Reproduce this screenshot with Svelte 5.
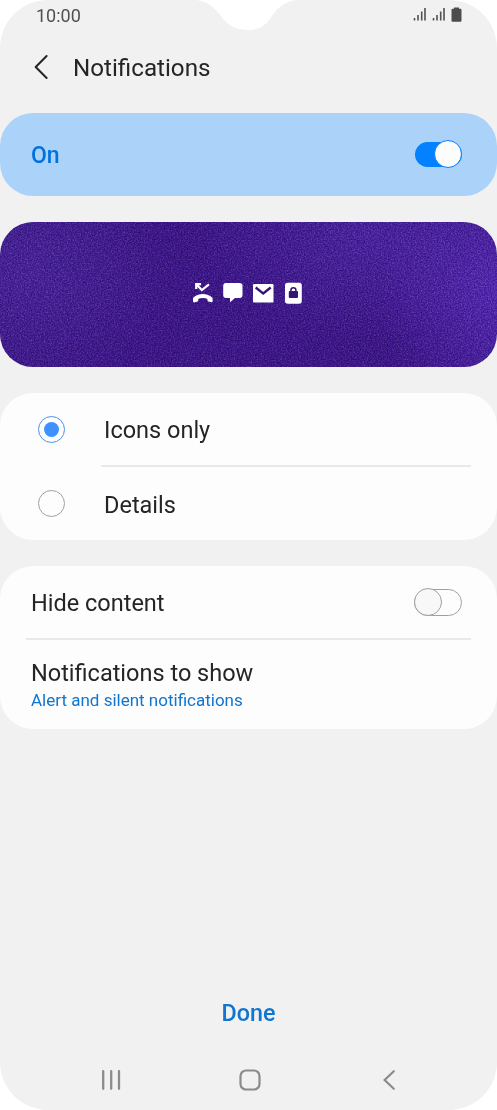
<script lang="ts">
  type Display = 'icons' | 'details';

  let enabled = $state(true);
  let hideContent = $state(false);
  let display = $state<Display>('icons');

  const options: { id: Display; label: string }[] = [
    { id: 'icons', label: 'Icons only' },
    { id: 'details', label: 'Details' },
  ];
</script>

{#snippet signal()}
  <svg class="signal" width="13" height="14" viewBox="0 0 13 14">
    <path d="M1.5 11v2.5M5 8v5.5M8.7 4.5v9M12 1v12.5" stroke="#505050" stroke-width="1.6" />
  </svg>
{/snippet}

<div class="phone">
  <svg class="notch" width="110" height="31" viewBox="0 0 110 31">
    <path d="M2 0C13 2 20 8 26 16C33 26 42 30 53.5 30C65 30 71 25 77 16C83 7 91 1 102 0Z" fill="#fff" />
  </svg>

  <div class="status">
    <span class="clock">10:00</span>
    <div class="indicators">
      {@render signal()}
      {@render signal()}
      <svg width="11" height="15" viewBox="0 0 11 15">
        <path d="M3 0.5h5v1.3h1.5q1 0 1 1v11q0 1-1 1h-8q-1 0-1-1v-11q0-1 1-1H3z" fill="#4c4c4c" />
      </svg>
    </div>
  </div>

  <header>
    <button class="back" aria-label="Back">
      <svg width="14" height="26" viewBox="0 0 14 26">
        <path d="M12.6 2L1.7 13L12.6 24" fill="none" stroke="#252525" stroke-width="2" stroke-linecap="round" stroke-linejoin="round" />
      </svg>
    </button>
    <h1>Notifications</h1>
  </header>

  <section class="card master">
    <span class="state">On</span>
    <button class="switch" class:on={enabled} role="switch" aria-checked={enabled} aria-label="Notifications" onclick={() => (enabled = !enabled)}>
      <span class="thumb"></span>
    </button>
  </section>

  <section class="card preview">
    <svg class="grain" width="497" height="145" aria-hidden="true">
      <filter id="grain" x="0" y="0" width="100%" height="100%" color-interpolation-filters="sRGB">
        <feTurbulence type="fractalNoise" baseFrequency="0.7" numOctaves="3" seed="4" />
        <feColorMatrix values="1.6 0 0 0 -0.3  1.6 0 0 0 -0.3  1.6 0 0 0 -0.3  0 0 0 0 1" />
      </filter>
      <rect width="497" height="145" filter="url(#grain)" />
    </svg>
    <div class="icons">
      <!-- missed call -->
      <svg width="22" height="22" viewBox="0 0 22 22">
        <path d="M4.2 7V2.2H9M4.6 2.6L9.8 8L17 2.3" fill="none" stroke="#fff" stroke-width="2.2" />
        <path d="M1 18.5V16C6 10.5 15.500 10.5 20.6 16V19.3Q20.6 20.4 19.5 20.3L16.2 19.5Q15.4 19.2 15.3 16.7Q11 15.2 6.5 16.7Q6.3 19.2 5.5 19.5L2 20.4Q1 20.4 1 18.5Z" fill="#fff" />
      </svg>
      <!-- message -->
      <svg width="22" height="22" viewBox="0 0 22 22">
        <path d="M4 1H17.5Q20.5 1 20.5 4V13Q20.5 16 17.5 16H13L8 20.3V16H4Q1.2 16 1.2 13V4Q1.2 1 4 1Z" fill="#fff" />
      </svg>
      <!-- mail -->
      <svg width="22" height="22" viewBox="0 0 22 22">
        <rect x="1" y="2" width="20.5" height="18.5" rx="1.2" fill="#fff" />
        <path d="M3.7 5.5L11.2 11.5L18.7 5.5" fill="none" stroke="#341477" stroke-width="2.3" />
      </svg>
      <!-- secure device -->
      <svg width="22" height="22" viewBox="0 0 22 22">
        <rect x="3" y="0.8" width="16.8" height="21" rx="2.8" fill="#fff" />
        <rect x="6.8" y="9" width="9.2" height="7" rx="1" fill="#341477" />
        <path d="M8.9 9.5V8.3a2.5 2.5 0 0 1 5 0v1.2" fill="none" stroke="#341477" stroke-width="1.5" />
      </svg>
    </div>
  </section>

  <section class="card options" role="radiogroup">
    {#each options as option (option.id)}
      <button class="option" role="radio" aria-checked={display === option.id} onclick={() => (display = option.id)}>
        <span class="radio" class:checked={display === option.id}></span>
        <span class="label">{option.label}</span>
      </button>
    {/each}
  </section>

  <section class="card settings">
    <div class="row">
      <span>Hide content</span>
      <button class="switch" class:on={hideContent} role="switch" aria-checked={hideContent} aria-label="Hide content" onclick={() => (hideContent = !hideContent)}>
        <span class="thumb"></span>
      </button>
    </div>
    <div class="show">
      <div class="title">Notifications to show</div>
      <div class="sub">Alert and silent notifications</div>
    </div>
  </section>

  <button class="done">Done</button>

  <nav>
    <button aria-label="Recents">
      <svg width="22" height="22" viewBox="0 0 22 22">
        <path d="M3.2 2.2V19.8M11.2 2.2V19.8M19 2.2V19.8" stroke="#8b8b8b" stroke-width="2.3" stroke-linecap="round" />
      </svg>
    </button>
    <button aria-label="Home">
      <svg width="22" height="22" viewBox="0 0 22 22">
        <rect x="1.5" y="1.5" width="19" height="19" rx="5.5" fill="none" stroke="#8b8b8b" stroke-width="2.2" />
      </svg>
    </button>
    <button aria-label="Back">
      <svg width="22" height="22" viewBox="0 0 22 22">
        <path d="M15.8 2.2L6.6 11L15.8 19.8" fill="none" stroke="#8b8b8b" stroke-width="2.2" stroke-linecap="round" />
      </svg>
    </button>
  </nav>
</div>

<style>
  :global(body) {
    background: #fff;
  }
  .phone {
    position: relative;
    display: flex;
    flex-direction: column;
    box-sizing: border-box;
    width: 497px;
    height: 1110px;
    overflow: hidden;
    border-radius: 48px;
    background: #f1f1f1;
    color: #252525;
    font-family: Roboto, sans-serif;
    font-size: 23.5px;
  }
  button {
    padding: 0;
    border: 0;
    background: none;
    color: inherit;
    font: inherit;
    cursor: pointer;
  }
  svg {
    display: block;
  }
  .notch {
    position: absolute;
    top: 0;
    left: 195px;
  }
  .status {
    display: flex;
    justify-content: space-between;
    align-items: center;
    height: 31px;
    padding: 0 35px 0 36px;
    color: #505050;
    font-size: 18px;
  }
  .indicators {
    display: flex;
    gap: 6px;
    margin-top: -2px;
  }
  header {
    display: flex;
    align-items: center;
    height: 72px;
    padding-left: 34px;
    margin-bottom: 10px;
  }
  .back {
    margin-top: -1px;
  }
  h1 {
    margin: 1px 0 0 25px;
    font-size: 24.2px;
    font-weight: 400;
  }
  .card {
    flex: none;
    box-sizing: border-box;
    margin-bottom: 26px;
    border-radius: 33px;
    background: #fdfdfd;
  }
  .master {
    display: flex;
    align-items: center;
    justify-content: space-between;
    height: 83px;
    padding: 0 35px 0 31px;
    background: #abd2f9;
    color: #0072de;
    font-size: 23px;
    font-weight: 500;
  }
  .state {
    padding-top: 2px;
  }
  .switch {
    display: flex;
    align-items: center;
    box-sizing: border-box;
    width: 48px;
    height: 27px;
    border: 1.5px solid #a0a0a0;
    border-radius: 14px;
  }
  .thumb {
    flex: none;
    box-sizing: border-box;
    width: 28px;
    height: 28px;
    margin-left: -1px;
    border: 1.5px solid #a0a0a0;
    border-radius: 50%;
    background: #f8f8f8;
  }
  .switch.on {
    justify-content: flex-end;
    width: 47px;
    height: 25px;
    margin-top: -1px;
    border: 0;
    background: #0381fe;
  }
  .switch.on .thumb {
    border-color: #0381fe;
    background: #fcfcfc;
  }
  .preview {
    position: relative;
    display: flex;
    justify-content: center;
    align-items: center;
    height: 145px;
    overflow: hidden;
    background:
      radial-gradient(ellipse 25% 90% at 101% 50%, rgba(88, 44, 184, 0.8), transparent),
      radial-gradient(ellipse 35% 70% at 75% 10%, rgba(76, 38, 162, 0.8), transparent),
      radial-gradient(ellipse 28% 80% at 6% 35%, rgba(74, 38, 154, 0.8), transparent),
      #3c1787;
  }
  .grain {
    position: absolute;
    inset: 0;
    mix-blend-mode: soft-light;
    opacity: 0.5;
  }
  .icons {
    position: relative;
    display: flex;
    gap: 8px;
    margin: -3px 2px 0 0;
  }
  .options {
    height: 147px;
  }
  .option {
    display: flex;
    align-items: center;
    width: 100%;
    height: 73.5px;
    padding-left: 38px;
    text-align: left;
  }
  .radio {
    display: grid;
    place-items: center;
    box-sizing: border-box;
    width: 27px;
    height: 27px;
    border: 1.5px solid #a0a0a0;
    border-radius: 50%;
  }
  .radio.checked {
    border-color: #4c91ec;
  }
  .radio.checked::after {
    content: '';
    width: 15px;
    height: 15px;
    border-radius: 50%;
    background: #3e91ff;
  }
  .label {
    display: flex;
    align-items: center;
    flex: 1;
    box-sizing: border-box;
    height: 100%;
    margin: 0 26px 0 36px;
    padding: 3px 0 0 3px;
  }
  .option:first-child .label {
    border-bottom: 2px solid #e9e9e9;
  }
  .settings {
    height: 163px;
    padding: 0 26px;
  }
  .row {
    display: flex;
    justify-content: space-between;
    align-items: center;
    box-sizing: border-box;
    height: 74px;
    padding: 0 9px 0 5px;
    border-bottom: 2px solid #e9e9e9;
  }
  .row > span {
    padding-top: 2px;
  }
  .show {
    padding: 18px 5px 0;
  }
  .title {
    line-height: 30px;
  }
  .sub {
    color: #0f75cf;
    font-size: 17px;
    line-height: 24px;
  }
  .done {
    align-self: center;
    margin-top: auto;
    color: #0f75cf;
    font-size: 23.3px;
    font-weight: 500;
    line-height: 30px;
  }
  nav {
    display: flex;
    justify-content: space-between;
    padding: 41px 97px 19px 100px;
  }
</style>
